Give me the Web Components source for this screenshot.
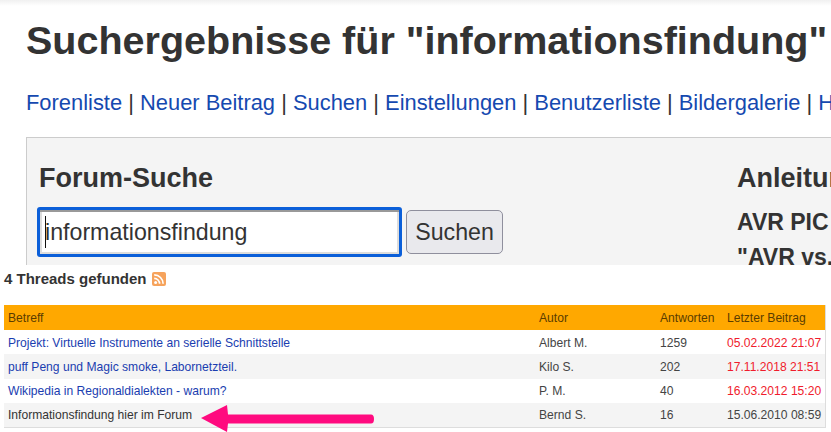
<!DOCTYPE html>
<html lang="de"><head><meta charset="utf-8"><title>Suchergebnisse</title>
<style>
html,body{margin:0;padding:0;background:#fff;overflow:hidden}
body{width:831px;height:432px;font-family:"Liberation Sans",Arial,sans-serif;color:#333}
</style></head><body>
<search-header></search-header>
<results-panel></results-panel>
<script>
class SearchHeader extends HTMLElement{constructor(){super();this.attachShadow({mode:'open'}).innerHTML=`<style>
:host{display:block;height:265px;overflow:hidden;box-sizing:border-box;padding:0 0 0 26px;background:linear-gradient(#f0f0f0,#fff 6px);white-space:nowrap;font-family:"Liberation Sans",Arial,sans-serif;color:#333}
h1{margin:0;padding-top:18px;font-size:39.5px;line-height:44px;font-weight:700}
nav{margin-top:28px;font-size:21.9px;line-height:26px;height:26px}
a{color:#1549b0;text-decoration:none}
.box{margin-top:21px;width:900px;box-sizing:border-box;height:200px;border:1px solid #ccc;background:#f4f4f4;padding:25px 0 0 10px;display:flex}
.l{width:700px;flex:none}
h2{margin:0;padding-left:2px;font-size:27px;line-height:31px;font-weight:700}
.r h2,.r h3{padding-left:0}
.f{display:flex;gap:4px;margin-top:13px;align-items:center}
.in{box-sizing:border-box;width:365px;height:50px;border:3px solid #0b5fd9;border-radius:3px;background:#fff;box-shadow:inset 0 2px 0 #999,inset 2px 0 0 #ddd,inset -2px 0 0 #ddd,inset 0 -2px 0 #ddd;font-size:23.2px;line-height:44px;padding-left:5px;position:relative}
.in i{position:absolute;left:5px;top:6px;width:1px;height:32px;background:#111}
button{font:23.2px "Liberation Sans",Arial,sans-serif;color:#333;background:#e9e9ed;border:1px solid #8f8f9d;border-radius:5px;height:44px;width:97px;padding:0}
h3{margin:0;font-size:23px;line-height:35px;font-weight:700}
.r h2{margin-bottom:11px}
</style>
<h1>Suchergebnisse für "informationsfindung"</h1>
<nav><a>Forenliste</a> | <a>Neuer Beitrag</a> | <a>Suchen</a> | <a>Einstellungen</a> | <a>Benutzerliste</a> | <a>Bildergalerie</a> | <a>Hilfe</a></nav>
<div class="box"><div class="l"><h2>Forum-Suche</h2><div class="f"><div class="in"><i></i>informationsfindung</div><button>Suchen</button></div></div>
<div class="r"><h2>Anleitungen</h2><h3>AVR PIC</h3><h3>"AVR vs.</h3></div></div>`}}
customElements.define('search-header',SearchHeader);

class RssIcon extends HTMLElement{constructor(){super();this.attachShadow({mode:'open'}).innerHTML=`<style>:host{display:inline-block;width:14px;height:14px}svg{display:block}</style>
<svg width="14" height="14" viewBox="0 0 14 14"><rect width="14" height="14" rx="2" fill="#f6a35c"/><circle cx="3.600" cy="10.600" r="1.500" fill="#fff"/><path d="M2.200 6.400a5.400 5.400 0 0 1 5.400 5.400M2.200 2.900a8.900 8.900 0 0 1 8.900 8.900" fill="none" stroke="#fff" stroke-width="1.700"/></svg>`}}
customElements.define('rss-icon',RssIcon);

const COLS='531px 121px 67px 102px';
class ThreadRow extends HTMLElement{constructor(){super();const a=k=>this.getAttribute(k);this.attachShadow({mode:'open'}).innerHTML=`<style>
:host{display:grid;grid-template-columns:${COLS};height:24.25px;align-items:center;font-size:12.1px;color:#444}
:host(:nth-of-type(even)){background:#f4f4f4}
:host([old]) a{color:#333}
div{padding:1px 0 0 4px;white-space:nowrap}
a{color:#1a3db0;text-decoration:none}
.d{color:#f01c2c}:host([old]) .d{color:#444}
</style><div><a>${a('t')}</a></div><div>${a('u')}</div><div>${a('n')}</div><div class="d">${a('d')}</div>`}}
customElements.define('thread-row',ThreadRow);

class ThreadTable extends HTMLElement{constructor(){super();this.attachShadow({mode:'open'}).innerHTML=`<style>
:host{display:block;width:821px;margin:16px 0 0 4px;border:solid #ddd;border-width:0 1px 1px 0;box-sizing:content-box;font-size:12.1px}
.h{display:grid;grid-template-columns:${COLS};height:25px;align-items:center;background:#ffa800;color:#5a3c00}
.h div{padding:1px 0 0 4px;white-space:nowrap}
</style><div class="h"><div>Betreff</div><div>Autor</div><div>Antworten</div><div>Letzter Beitrag</div></div><slot></slot>`}}
customElements.define('thread-table',ThreadTable);

class ResultsPanel extends HTMLElement{constructor(){super();this.attachShadow({mode:'open'}).innerHTML=`<style>
:host{display:block;height:167px;position:relative;background:#fff;font-family:"Liberation Sans",Arial,sans-serif;color:#333}
p{margin:0 0 0 4px;padding-top:3px;font-size:15px;line-height:20px;height:21px;font-weight:700;display:flex;gap:5px;align-items:center}
svg.arrow{position:absolute;left:200px;top:139px}
</style><p><span>4 Threads gefunden</span><rss-icon></rss-icon></p>
<thread-table>
<thread-row t="Projekt: Virtuelle Instrumente an serielle Schnittstelle" u="Albert M." n="1259" d="05.02.2022 21:07"></thread-row>
<thread-row t="puff Peng und Magic smoke, Labornetzteil." u="Kilo S." n="202" d="17.11.2018 21:51"></thread-row>
<thread-row t="Wikipedia in Regionaldialekten - warum?" u="P. M." n="40" d="16.03.2012 15:20"></thread-row>
<thread-row old t="Informationsfindung hier im Forum" u="Bernd S." n="16" d="15.06.2010 08:59"></thread-row>
</thread-table>
<svg class="arrow" width="175" height="28" viewBox="0 0 175 28"><path d="M1 14 27 1 28 10.500H171a3 4.500 0 0 1 0 9H28L27 28Z" fill="#ff0a7f"/></svg>`}}
customElements.define('results-panel',ResultsPanel);
</script></body></html>
